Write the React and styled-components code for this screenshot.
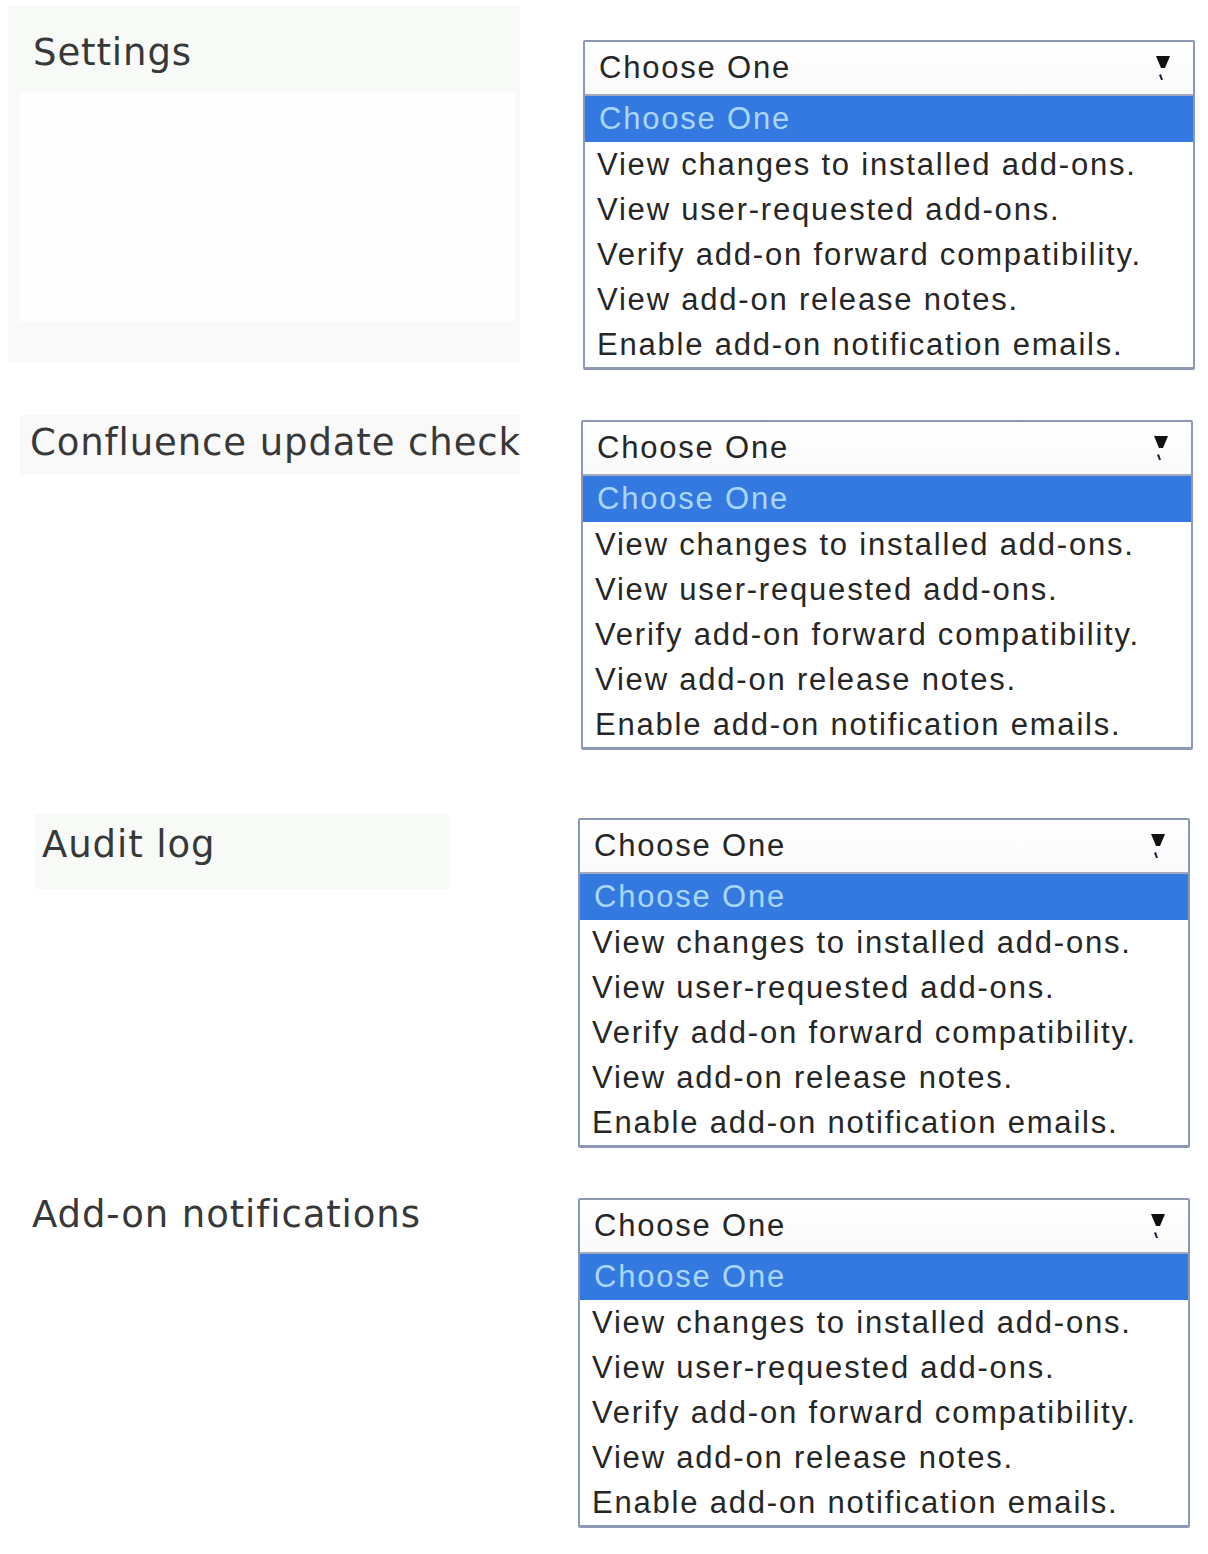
import React from "react";
import styled, { createGlobalStyle } from "styled-components";

const Global = createGlobalStyle`
  html, body { margin: 0; padding: 0; background: #ffffff; }
  body { font-family: "Liberation Sans", Arial, sans-serif; }
`;

const Page = styled.div`
  width: 1208px;
  min-height: 1554px;
  padding-top: 5px;
  box-sizing: border-box;
  display: flex;
  flex-direction: column;
`;

const Row = styled.section`
  display: flex;
  align-items: flex-start;
  margin-top: ${(p) => p.$top}px;
`;

const LabelColumn = styled.div`
  width: 540px;
  flex: none;
  display: flex;
  flex-direction: column;
`;

const LabelPanel = styled.div`
  margin-left: ${(p) => p.$x}px;
  width: ${(p) => p.$w}px;
  background: ${(p) => p.$bg};
  padding-bottom: ${(p) => p.$pb || 0}px;
  box-sizing: border-box;
`;

const LabelHead = styled.div`
  height: ${(p) => p.$h}px;
  box-sizing: border-box;
  display: flex;
  align-items: center;
  padding: ${(p) => p.$pt || 0}px 0 ${(p) => p.$pb || 0}px ${(p) => p.$pad}px;
  background: ${(p) => p.$bg || "transparent"};
`;

const LabelText = styled.h2`
  margin: 0;
  font-family: "DejaVu Sans", Verdana, sans-serif;
  font-weight: normal;
  font-size: 37px;
  letter-spacing: 0.9px;
  color: #383838;
  white-space: nowrap;
`;

const InnerWhite = styled.div`
  margin-left: 12px;
  width: 495px;
  height: 230px;
  background: #fefefe;
`;

const Select = styled.div`
  margin-left: ${(p) => p.$x}px;
  margin-top: ${(p) => p.$y}px;
  width: 612px;
  border: 2px solid #8d99b4;
  border-bottom-width: 3px;
  border-radius: 2px;
  background: #ffffff;
  box-sizing: border-box;
  font-family: "Liberation Sans", Arial, sans-serif;
  font-size: 31px;
  letter-spacing: 1.8px;
  color: #262626;
`;

const SelectHead = styled.div`
  height: 52px;
  display: flex;
  align-items: center;
  justify-content: space-between;
  padding: 0 22px 0 14px;
  border-bottom: 2px solid #a3aabb;
  background: linear-gradient(#ffffff, #fafafa);
`;

const Option = styled.div`
  height: ${(p) => (p.$selected ? 46 : 45)}px;
  display: flex;
  align-items: center;
  padding-left: ${(p) => (p.$selected ? 14 : 12)}px;
  white-space: nowrap;
  background: ${(p) => (p.$selected ? "#3479e0" : "transparent")};
  color: ${(p) => (p.$selected ? "#a9d6ff" : "#262626")};
`;

const Arrow = () => (
  <svg width="16" height="30" viewBox="0 0 16 30">
    <path d="M1 3 L15 3 L10 15 L6 15 Z" fill="#111" />
    <path d="M4 22 L6 21 L8 27 L6 27 Z" fill="#1a2440" />
  </svg>
);

const OPTIONS = [
  "View changes to installed add-ons.",
  "View user-requested add-ons.",
  "Verify add-on forward compatibility.",
  "View add-on release notes.",
  "Enable add-on notification emails.",
];

const Dropdown = ({ x, y }) => (
  <Select $x={x} $y={y}>
    <SelectHead>
      <span>Choose One</span>
      <Arrow />
    </SelectHead>
    <Option $selected>Choose One</Option>
    {OPTIONS.map((o) => (
      <Option key={o}>{o}</Option>
    ))}
  </Select>
);

export default function App() {
  return (
    <Page>
      <Global />
      <Row $top={0}>
        <LabelColumn>
          <LabelPanel $x={8} $w={512} $bg="#f8f9f8" $pb={40}>
            <LabelHead $h={87} $pt={7} $pad={25} $bg="#f7faf6">
              <LabelText>Settings</LabelText>
            </LabelHead>
            <InnerWhite />
          </LabelPanel>
        </LabelColumn>
        <Dropdown x={43} y={35} />
      </Row>

      <Row $top={45}>
        <LabelColumn>
          <LabelPanel $x={20} $w={500} $bg="#f9f9f9">
            <LabelHead $h={60} $pb={6} $pad={10}>
              <LabelText>Confluence update check</LabelText>
            </LabelHead>
          </LabelPanel>
        </LabelColumn>
        <Dropdown x={41} y={5} />
      </Row>

      <Row $top={64}>
        <LabelColumn>
          <LabelPanel $x={35} $w={415} $bg="#f7faf6">
            <LabelHead $h={75} $pb={14} $pad={7}>
              <LabelText>Audit log</LabelText>
            </LabelHead>
          </LabelPanel>
        </LabelColumn>
        <Dropdown x={38} y={4} />
      </Row>

      <Row $top={43}>
        <LabelColumn>
          <LabelPanel $x={22} $w={420} $bg="#ffffff">
            <LabelHead $h={46} $pad={10}>
              <LabelText>Add-on notifications</LabelText>
            </LabelHead>
          </LabelPanel>
        </LabelColumn>
        <Dropdown x={38} y={7} />
      </Row>
    </Page>
  );
}
